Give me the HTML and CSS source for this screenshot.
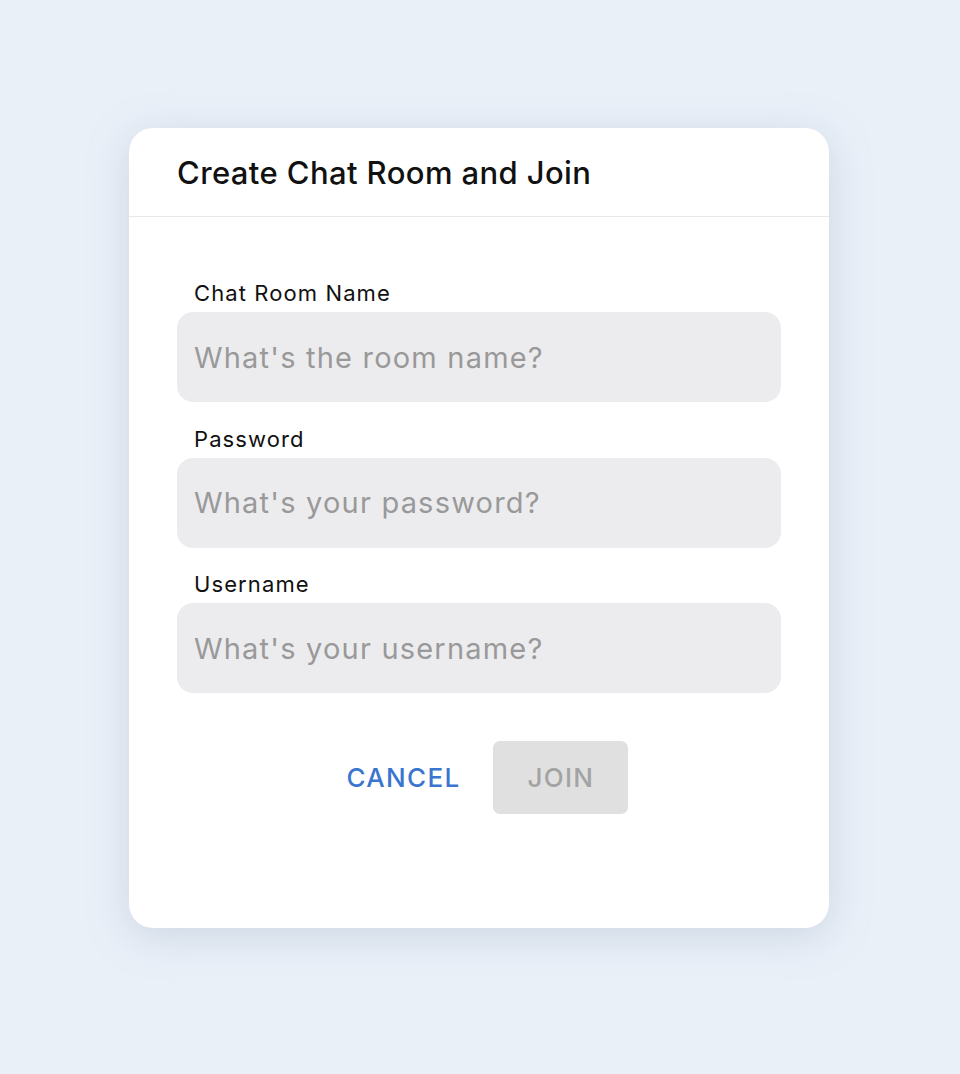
FILE: index.html
```html
<!DOCTYPE html>
<html>
<head>
<meta charset="utf-8">
<link rel="stylesheet" href="styles.css">
</head>
<body>
<div class="page">
  <div class="card">
    <div class="header">
      <h1 class="title">Create Chat Room and Join</h1>
    </div>
    <div class="body">
      <div class="field">
        <label class="label">Chat Room Name</label>
        <input class="input" type="text" placeholder="What's the room name?">
      </div>
      <div class="field">
        <label class="label">Password</label>
        <input class="input" type="password" placeholder="What's your password?">
      </div>
      <div class="field">
        <label class="label">Username</label>
        <input class="input" type="text" placeholder="What's your username?">
      </div>
      <div class="actions">
        <button class="btn-cancel">CANCEL</button>
        <button class="btn-join" disabled>JOIN</button>
      </div>
    </div>
  </div>
</div>
</body>
</html>
```

FILE: styles.css
```css
html, body {
  margin: 0;
  padding: 0;
}
body {
  background: #eaf0f8;
  font-family: Inter, "Open Sans", "Liberation Sans", sans-serif;
}
.page {
  width: 960px;
  height: 1074px;
  display: flex;
  padding: 128px 0 0 129px;
  box-sizing: border-box;
}
.card {
  width: 700px;
  height: 800px;
  background: #fff;
  border-radius: 24px;
  box-shadow: 0 8px 40px rgba(150, 165, 190, 0.35);
  box-sizing: border-box;
}
.header {
  height: 88px;
  border-bottom: 1px solid #e8e8e8;
  padding-left: 48px;
  display: flex;
  align-items: center;
}
.title {
  margin: 0;
  font-size: 31px;
  font-weight: 500;
  color: #111;
  letter-spacing: 0.4px;
}
.body {
  padding: 61px 48px 0 48px;
}
.field {
  display: flex;
  flex-direction: column;
  margin-bottom: 21.5px;
}
.label {
  font-size: 22px;
  color: #111;
  padding-left: 17px;
  line-height: 30px;
  margin-bottom: 4px;
  letter-spacing: 1.1px;
}
.input {
  height: 90px;
  border: none;
  border-radius: 16px;
  background: #ececee;
  padding: 0 17px;
  font-family: inherit;
  font-size: 29px;
  letter-spacing: 1.2px;
  color: #333;
  outline: none;
  box-sizing: border-box;
  width: 604px;
}
.input::placeholder {
  color: #999;
}
.actions {
  display: flex;
  justify-content: center;
  align-items: center;
  gap: 33px;
  margin-top: 48px;
  padding-left: 17px;
}
.btn-cancel {
  background: none;
  border: none;
  font-family: inherit;
  font-size: 26px;
  font-weight: 500;
  letter-spacing: 1.3px;
  color: #3a75cf;
  padding: 0;
  cursor: pointer;
}
.btn-join {
  width: 135px;
  height: 73px;
  border: none;
  border-radius: 7px;
  background: #e0e0e0;
  color: #a3a3a3;
  font-family: inherit;
  font-size: 26px;
  font-weight: 500;
  letter-spacing: 1.3px;
}
```
